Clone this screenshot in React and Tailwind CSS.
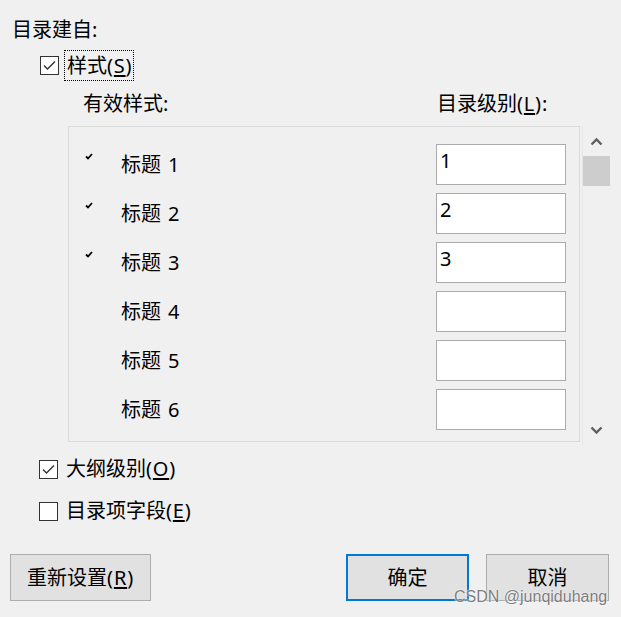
import React from "react";

const FONT = { fontFamily: '"Noto Sans", "Noto Sans CJK SC", sans-serif' };

function CheckBox({ checked }) {
  return (
    <div className="w-[19px] h-[19px] border border-[#333333] bg-white flex items-center justify-center shrink-0">
      {checked && (
        <svg width="17" height="17" viewBox="0 0 17 17">
          <path d="M3 8.5 L6.5 12 L14 4.5" fill="none" stroke="#333333" strokeWidth="1.4" />
        </svg>
      )}
    </div>
  );
}

function SmallCheck() {
  return (
    <svg width="8" height="7" viewBox="0 0 8 7">
      <path d="M1 3.5 L3 5.5 L7 1" fill="none" stroke="#000" strokeWidth="1.8" />
    </svg>
  );
}

function Chevron({ up }) {
  return (
    <svg width="13" height="9" viewBox="0 0 13 9">
      <path
        d={up ? "M1.5 7.5 L6.5 2.5 L11.5 7.5" : "M1.5 1.5 L6.5 6.5 L11.5 1.5"}
        fill="none"
        stroke="#606060"
        strokeWidth="2.4"
      />
    </svg>
  );
}

const rows = [
  { name: "标题", num: "1", level: "1", checked: true },
  { name: "标题", num: "2", level: "2", checked: true },
  { name: "标题", num: "3", level: "3", checked: true },
  { name: "标题", num: "4", level: "", checked: false },
  { name: "标题", num: "5", level: "", checked: false },
  { name: "标题", num: "6", level: "", checked: false },
];

function L({ children }) {
  return <span className="tracking-[0.8px]">{children}</span>;
}

export default function App() {
  return (
    <div className="relative w-[621px] h-[617px] bg-[#f0f0f0] text-black text-[20px] overflow-hidden" style={FONT}>
      <div className="flex flex-col">
        <div className="mt-[16px] ml-[12px] leading-[28px]">目录建自:</div>

        <div className="mt-[6px] ml-[40px] flex items-center h-[31px]">
          <CheckBox checked />
          <div className="ml-[5px] h-[31px] pl-[2px] pr-[1px] border border-dotted border-black flex items-center leading-none">
            样式<L>(<span className="underline underline-offset-2">S</span>)</L>
          </div>
        </div>

        <div className="mt-[9px] flex h-[28px] items-center leading-[28px]">
          <div className="ml-[83px] w-[354px]">有效样式:</div>
          <div>
            目录级别<L>(<span className="underline underline-offset-2">L</span>):</L>
          </div>
        </div>

        <div className="mt-[8px] ml-[68px] flex items-start">
          <div className="w-[512px] h-[316px] border border-[#dadada] pt-[17px] overflow-hidden">
            {rows.map((r) => (
              <div key={r.num} className="grid grid-cols-[52px_315px_130px] h-[41px] mb-[8px]">
                <div className="pl-[16px] pt-[9px]">{r.checked && <SmallCheck />}</div>
                <div className="flex items-center leading-none">
                  {r.name}
                  <span className="ml-[7px]">{r.num}</span>
                </div>
                <div className="h-[41px] w-[130px] bg-white border border-[#ababab] px-[3px] leading-[31px]">
                  {r.level}
                </div>
              </div>
            ))}
          </div>
          <div className="ml-[2px] w-[28px] h-[319px] flex flex-col border-l border-[#e6e6e6]">
            <div className="h-[30px] flex items-center justify-center">
              <Chevron up />
            </div>
            <div className="h-[30px] bg-[#cdcdcd]" />
            <div className="flex-1" />
            <div className="h-[30px] flex items-center justify-center">
              <Chevron />
            </div>
          </div>
        </div>

        <div className="mt-[10px] ml-[39px] flex items-center h-[28px]">
          <CheckBox checked />
          <div className="ml-[8px] leading-none">
            大纲级别<L>(<span className="underline underline-offset-2">O</span>)</L>
          </div>
        </div>

        <div className="mt-[14px] ml-[39px] flex items-center h-[28px]">
          <CheckBox />
          <div className="ml-[8px] leading-none">
            目录项字段<L>(<span className="underline underline-offset-2">E</span>)</L>
          </div>
        </div>

        <div className="mt-[29px] flex items-start">
          <button className="ml-[10px] w-[141px] h-[47px] bg-[#e1e1e1] border border-[#adadad] flex items-center justify-center leading-none">
            重新设置<L>(<span className="underline underline-offset-2">R</span>)</L>
          </button>
          <button className="ml-[195px] w-[123px] h-[47px] bg-[#e1e1e1] border-2 border-[#0078d7] flex items-center justify-center leading-none">
            确定
          </button>
          <button className="ml-[17px] w-[123px] h-[47px] bg-[#e1e1e1] border border-[#adadad] flex items-center justify-center leading-none">
            取消
          </button>
        </div>
      </div>

      <div
        className="absolute left-[454px] top-[589px] text-[16px] leading-none text-[#7d7d7d] [text-shadow:0_0_2px_#ffffff,0_0_1px_#ffffff]"
        style={{ fontFamily: '"Liberation Sans", Arial, sans-serif' }}
      >
        CSDN @junqiduhang
      </div>
    </div>
  );
}
